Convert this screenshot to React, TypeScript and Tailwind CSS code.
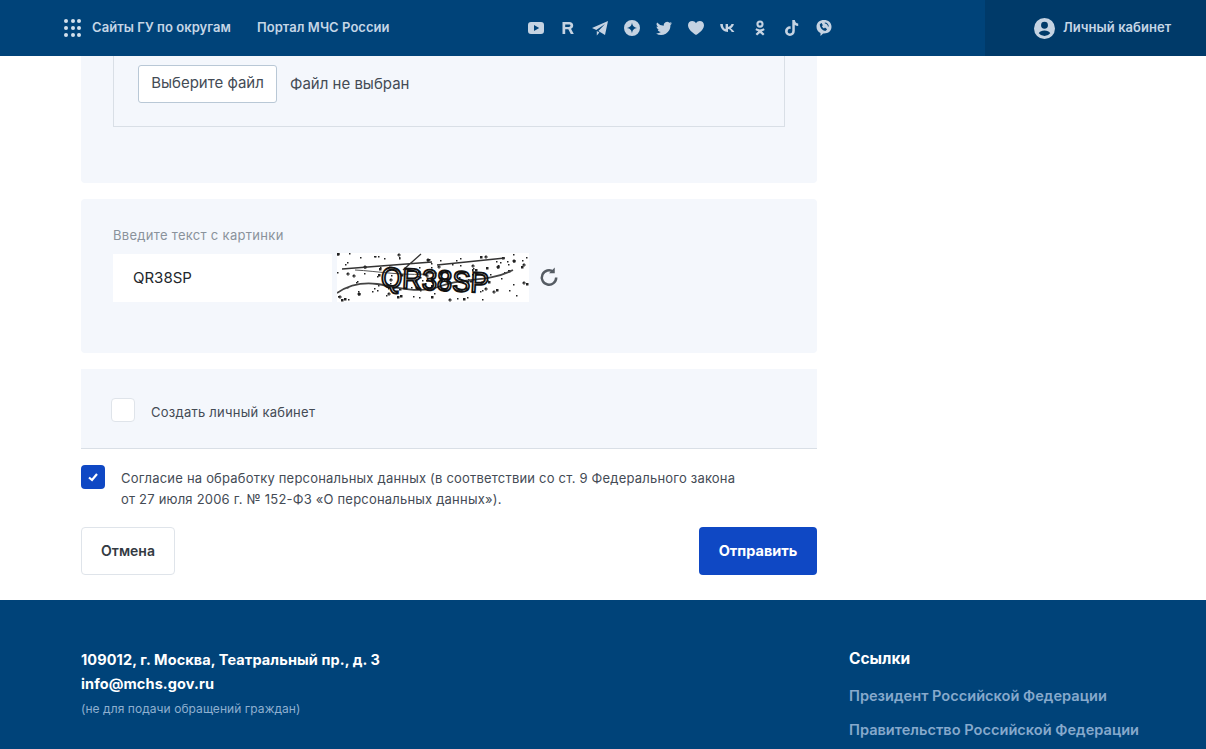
import React from 'react';

const font = { fontFamily: 'Inter, "Noto Sans", sans-serif' };

// noise for the captcha, fixed seed so it stays the same between renders
const dots: [number, number, number][] = Array.from({ length: 130 }).map((_, i) => [
  (i * 73 + (i * i) % 37) % 190,
  (i * 31 + (i * i * 3) % 23) % 47,
  i % 4 === 0 ? 2.500 : 1.500,
]);

function Captcha() {
  return (
    <svg width="192" height="49" viewBox="0 0 192 49" className="bg-white shrink-0">
      {dots.map(([x, y, s], i) => (
        <g key={i} fill="#222">
          <rect x={x} y={y} width={s} height={s} />
          {i % 5 === 0 && <path d={`M${x - 1} ${y + 1}h4M${x + 1} ${y - 1}v4`} stroke="#222" strokeWidth="0.800" />}
        </g>
      ))}
      <path d="M5 16L95 9M84 1L66 17M100 12L168 5" stroke="#333" strokeWidth="1.300" fill="none" />
      <path d="M0 40C12 32 24 29 40 31S80 42 104 33S150 30 176 17" stroke="#444" strokeWidth="1.800" fill="none" />
      <path d="M18 17C40 18 70 24 100 20" stroke="#555" strokeWidth="1" fill="none" />
      <text
        x="44"
        y="37"
        fontSize="29"
        textLength="108"
        lengthAdjust="spacingAndGlyphs"
        fill="none"
        stroke="#111"
        strokeWidth="1.900"
        style={{ fontFamily: '"Liberation Sans", sans-serif' }}
        transform="rotate(3 96 24)"
      >
        QR38SP
      </text>
    </svg>
  );
}

const iconCls = 'w-4 h-4 fill-[#c5d3e2]';

function Socials() {
  return (
    <div className="flex items-center gap-4">
      <svg viewBox="0 0 16 16" className={iconCls}><path fillRule="evenodd" d="M3 2h10a3 3 0 0 1 3 3v6a3 3 0 0 1-3 3H3a3 3 0 0 1-3-3V5a3 3 0 0 1 3-3zM6 5v6l5.200-3z" /></svg>
      <svg viewBox="0 0 16 16" className={iconCls}><path fillRule="evenodd" d="M2.500 2h6.800c2.400 0 3.900 1.400 3.900 3.500 0 1.600-.8 2.700-2.200 3.200l2.800 5.300h-3l-2.500-4.800H5.200V14H2.500zm2.700 2.400v2.500h3.700c1 0 1.600-.5 1.600-1.300s-.6-1.200-1.600-1.200z" /></svg>
      <svg viewBox="0 0 16 16" className={iconCls}><path d="M16 1 0 8l4.300 2L13 4l-6.600 7 6.600 4zM4.800 11v4.500l2.600-3z" /></svg>
      <svg viewBox="0 0 16 16" className={iconCls}><path fillRule="evenodd" d="M8 0a8 8 0 1 1 0 16A8 8 0 0 1 8 0zm0 2.600C7.500 6 6.300 7.400 2.800 8c3.500.6 4.700 2 5.200 5.400.5-3.400 1.700-4.800 5.200-5.400-3.500-.6-4.700-2-5.200-5.400z" /></svg>
      <svg viewBox="0 0 16 16" className={iconCls}><path d="M16 3.300c-.6.300-1.200.4-1.900.5.700-.4 1.200-1 1.400-1.800-.6.400-1.300.7-2.100.8A3.300 3.300 0 0 0 7.800 5.800 9.300 9.300 0 0 1 1.100 2.400a3.300 3.300 0 0 0 1 4.400c-.5 0-1-.2-1.500-.4 0 1.600 1.100 2.900 2.600 3.200-.5.100-1 .2-1.500.1.400 1.300 1.600 2.200 3.100 2.300A6.600 6.600 0 0 1 0 13.400 9.300 9.300 0 0 0 14.400 5c.6-.4 1.200-1 1.600-1.700z" /></svg>
      <svg viewBox="0 0 16 16" className={iconCls}><path d="M8 15S0 10.400 0 5.200C0 2.600 2 1 4.200 1 5.800 1 7.200 1.900 8 3.200 8.800 1.900 10.200 1 11.800 1 14 1 16 2.600 16 5.200 16 10.400 8 15 8 15z" /></svg>
      <svg viewBox="0 0 16 16" className={iconCls}><path d="M8.700 12C3.400 12 .4 8.600.2 4h2.600c.1 3.400 1.600 4.800 2.800 5.100V4H8v2.900c1.500-.2 3-1.400 3.500-2.900h2.400c-.4 2.200-2 3.700-3.200 4.400 1.200.6 3 2 3.700 3.600h-2.700C11.200 10.400 9.900 9.200 8 9v3z" /></svg>
      <svg viewBox="0 0 16 16" className={iconCls}><path fillRule="evenodd" d="M8 .5a3.600 3.600 0 1 1 0 7.200A3.600 3.600 0 0 1 8 .5zm0 2.100a1.500 1.500 0 1 0 0 3 1.500 1.500 0 0 0 0-3zM4.300 8.300c2.300 1.500 5.100 1.500 7.400 0l1 1.700c-.9.600-1.900 1-2.900 1.200l2.700 2.700-1.500 1.500L8 12.900l-2.900 2.500-1.500-1.500 2.700-2.700c-1-.2-2-.6-2.900-1.200z" /></svg>
      <svg viewBox="0 0 16 16" className={iconCls}><path d="M8.300 0h2.500c.2 2 1.500 3.300 3.400 3.500V6c-1.300 0-2.400-.4-3.400-1.100v6.200a4.900 4.900 0 1 1-4.900-4.900l.7.100v2.600a2.300 2.300 0 1 0 1.700 2.200z" /></svg>
      <svg viewBox="0 0 16 16" className={iconCls}><path fillRule="evenodd" d="M8 0c4.300 0 7.500 2.700 7.500 6.800S12.400 13.500 8 13.500h-.9L4.500 16v-3C2 12 .5 9.800.5 6.800.5 2.700 3.700 0 8 0zM5 3.200 3.700 4.400c.3 3.300 2.400 5.800 5.600 6.700l1.500-1.400c.2-.3.200-.6 0-.8L9.400 7.800c-.3-.2-.6-.2-.8 0l-.6.600C7.100 8 6.300 7.100 6 6.200l.6-.6c.2-.2.200-.5 0-.8L5.700 3.300c-.2-.2-.5-.3-.7-.1zM8.800 2.500v.9c1.800.1 3 1.300 3.100 3.100h.9c-.1-2.300-1.700-3.900-4-4z" /></svg>
    </div>
  );
}

export default function App() {
  return (
    <div className="w-[1206px] h-[749px] overflow-hidden bg-white flex flex-col" style={font}>
      <header className="h-14 shrink-0 bg-[#004379] flex items-center">
        <div className="flex items-center pl-[64px] w-[985px] shrink-0">
          <div className="grid grid-cols-3 gap-[3px] w-[17px] mr-[11px]">
            {Array.from({ length: 9 }).map((_, i) => (
              <span key={i} className="w-[4px] h-[4px] rounded-full bg-[#d3e0ec]" />
            ))}
          </div>
          <span className="text-[13px] font-semibold tracking-[0.05px] text-[#c5d6e6] w-[165px] whitespace-nowrap">Сайты ГУ по округам</span>
          <span className="text-[13px] font-semibold tracking-[0.05px] text-[#c5d6e6] w-[271px] whitespace-nowrap">Портал МЧС России</span>
          <Socials />
        </div>
        <div className="flex-1 h-full bg-[#003a69] flex items-center pl-[49px] gap-[8px]">
          <svg viewBox="0 0 22 22" className="w-[21px] h-[21px] fill-[#c5d3e2]">
            <path fillRule="evenodd" d="M11 0a11 11 0 1 1 0 22 11 11 0 0 1 0-22zm0 4a3.600 3.600 0 1 0 0 7.200A3.600 3.600 0 0 0 11 4zm0 9c-2.700 0-5 1-6 3a7.700 7.700 0 0 0 12 0c-1-2-3.300-3-6-3z" />
          </svg>
          <span className="text-[13px] font-semibold tracking-[0.05px] text-[#c5d6e6] whitespace-nowrap">Личный кабинет</span>
        </div>
      </header>

      <main className="flex-1 pl-[81px]">
        <div className="w-[736px]">
          <section className="h-[127px] bg-[#f4f7fc] rounded-b-[4px] px-[32px]">
            <div className="h-[71px] border border-t-0 border-[#d9dfe6] pl-[24px] pt-[9px] flex items-start">
              <button className="h-[38px] w-[139px] bg-white border border-[#b9c8d6] rounded-[3px] pb-[2px] text-[15px] text-[#444b55]">
                Выберите файл
              </button>
              <span className="ml-[13px] mt-[8px] text-[15px] text-[#444b55]">Файл не выбран</span>
            </div>
          </section>

          <section className="h-[154px] mt-4 bg-[#f4f7fc] rounded-[4px] px-[32px] pt-[28px]">
            <div className="text-[13px] leading-[16px] tracking-[0.3px] text-[#8a929b]">Введите текст с картинки</div>
            <div className="flex items-center mt-[10px]">
              <div className="w-[219px] h-[48px] bg-white pl-[20px] pt-[1px] flex items-center text-[15px] text-[#23272c]">QR38SP</div>
              <div className="ml-[5px]"><Captcha /></div>
              <svg viewBox="0 0 24 24" className="ml-[9px] w-[23px] h-[23px] fill-none stroke-[#555c63]" strokeWidth="2.600">
                <path d="M19 12a7.500 7.500 0 1 1-3-6" />
                <path d="M17.500 1.500v6h-6z" className="fill-[#555c63] stroke-none" />
              </svg>
            </div>
          </section>

          <section className="h-[80px] mt-4 bg-[#f4f7fc] border-b border-[#d9dfe6] pl-[30px] flex items-center">
            <span className="w-6 h-6 bg-white border border-[#dfe4ea] rounded-[4px] mt-[3px]" />
            <span className="ml-[16px] mt-[9px] text-[13px] tracking-[0.25px] text-[#444b55]">Создать личный кабинет</span>
          </section>

          <div className="flex mt-[16px]">
            <span className="w-6 h-6 bg-[#0f48c4] rounded-[4px] flex items-center justify-center shrink-0">
              <svg viewBox="0 0 12 12" className="w-[12px] h-[12px] fill-none stroke-white" strokeWidth="2.200"><path d="M2 6.500 5 9l5-6" /></svg>
            </span>
            <p className="ml-[16px] mt-[3px] text-[13px] leading-[21px] tracking-[0.2px] text-[#444b55] whitespace-nowrap">
              Согласие на обработку персональных данных (в соответствии со ст. 9 Федерального закона
              <br />
              от 27 июля 2006 г. № 152-ФЗ «О персональных данных»).
            </p>
          </div>

          <div className="flex justify-between mt-[17px]">
            <button className="w-[94px] h-[48px] bg-white border border-[#dfe4ea] rounded-[4px] pb-[1px] text-[14px] font-semibold text-[#333a42]">Отмена</button>
            <button className="w-[118px] h-[48px] bg-[#0f48c4] rounded-[4px] text-[14.500px] font-bold text-white">Отправить</button>
          </div>
        </div>
      </main>

      <footer className="h-[149px] shrink-0 bg-[#004379] pl-[81px] pt-[50px] flex overflow-hidden">
        <div className="w-[768px]">
          <div className="text-[14.500px] leading-[20px] font-bold tracking-[0.1px] text-white">109012, г. Москва, Театральный пр., д. 3</div>
          <div className="text-[14.500px] leading-[20px] mt-[4px] font-bold tracking-[0.1px] text-white">info@mchs.gov.ru</div>
          <div className="text-[12px] leading-[16px] mt-[7px] tracking-[0.06px] text-[#8fb0d0]">(не для подачи обращений граждан)</div>
        </div>
        <div className="-mt-[1px]">
          <div className="text-[15.500px] leading-[20px] font-bold text-white">Ссылки</div>
          <div className="text-[14.600px] leading-[20px] mt-[17px] font-semibold text-[#86a9cc]">Президент Российской Федерации</div>
          <div className="text-[14.600px] leading-[20px] mt-[14px] font-semibold text-[#86a9cc]">Правительство Российской Федерации</div>
        </div>
      </footer>
    </div>
  );
}
